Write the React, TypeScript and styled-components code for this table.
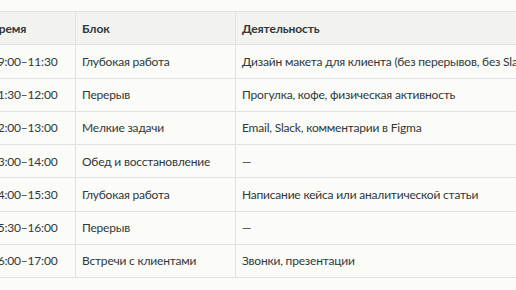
import React from "react";
import styled, { createGlobalStyle } from "styled-components";

const GlobalStyle = createGlobalStyle`
  html, body {
    margin: 0;
    padding: 0;
    background: #fbfbf8;
  }
  body {
    font-family: Lato, "Liberation Sans", sans-serif;
    color: #30383a;
  }
`;

const rows = [
  { time: "09:00–11:30", block: "Глубокая работа", activity: "Дизайн макета для клиента (без перерывов, без Slack)" },
  { time: "11:30–12:00", block: "Перерыв", activity: "Прогулка, кофе, физическая активность" },
  { time: "12:00–13:00", block: "Мелкие задачи", activity: "Email, Slack, комментарии в Figma" },
  { time: "13:00–14:00", block: "Обед и восстановление", activity: "—" },
  { time: "14:00–15:30", block: "Глубокая работа", activity: "Написание кейса или аналитической статьи" },
  { time: "15:30–16:00", block: "Перерыв", activity: "—" },
  { time: "16:00–17:00", block: "Встречи с клиентами", activity: "Звонки, презентации" },
];

const App = () => {
  return (
    <>
      <GlobalStyle />
      <Page>
        <Table>
          <colgroup>
            <col style={{ width: 91 }} />
            <col style={{ width: 160 }} />
            <col style={{ width: 400 }} />
          </colgroup>
          <thead>
            <tr>
              <Th>Время</Th>
              <Th>Блок</Th>
              <Th>Деятельность</Th>
            </tr>
          </thead>
          <tbody>
            {rows.map((r) => (
              <tr key={r.time}>
                <Td>{r.time}</Td>
                <Td>{r.block}</Td>
                <Td>{r.activity}</Td>
              </tr>
            ))}
          </tbody>
        </Table>
      </Page>
    </>
  );
};

export default App;

const Page = styled.div`
  width: 516px;
  height: 290px;
  overflow: hidden;
  padding-top: 11px;
  box-sizing: border-box;
`;

const Table = styled.table`
  border-collapse: collapse;
  table-layout: fixed;
  width: 651px;
  margin-left: -16px;
`;

const Th = styled.th`
  height: 32.25px;
  padding: 0 6px;
  text-align: left;
  font-size: 12px;
  letter-spacing: -0.1px;
  font-weight: 700;
  background: #f2f2ef;
  border: 1px solid #e2e2de;
  white-space: nowrap;
  overflow: hidden;
`;

const Td = styled.td`
  height: 32.25px;
  padding: 0 6px;
  font-size: 12px;
  letter-spacing: -0.2px;
  font-weight: 400;
  border: 1px solid #e2e2de;
  white-space: nowrap;
  overflow: hidden;
`;
